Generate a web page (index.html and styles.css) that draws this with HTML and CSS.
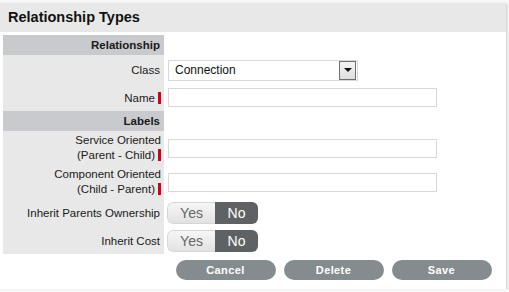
FILE: index.html
```html
<!DOCTYPE html>
<html>
<head>
<meta charset="utf-8">
<link rel="stylesheet" href="styles.css">
</head>
<body>
<div class="panel">
  <div class="title">Relationship Types</div>
  <div class="form">
    <div class="head">Relationship</div><div class="val"></div>

    <div class="lbl r-class">Class</div>
    <div class="val r-class">
      <div class="select"><span class="sel-text">Connection</span><span class="sel-btn"><span class="tri"></span></span></div>
    </div>

    <div class="lbl req r-name">Name<span class="mark"></span></div>
    <div class="val r-name"><div class="input"></div></div>

    <div class="head">Labels</div><div class="val"></div>

    <div class="lbl req r-two"><span class="two">Service Oriented<br>(Parent - Child)<span class="mark"></span></span></div>
    <div class="val r-two"><div class="input"></div></div>

    <div class="lbl req r-two"><span class="two">Component Oriented<br>(Child - Parent)<span class="mark"></span></span></div>
    <div class="val r-two"><div class="input"></div></div>

    <div class="lbl r-tog1">Inherit Parents Ownership</div>
    <div class="val r-tog1"><div class="toggle"><span class="yes">Yes</span><span class="no">No</span></div></div>

    <div class="lbl r-tog2">Inherit Cost</div>
    <div class="val r-tog2"><div class="toggle"><span class="yes">Yes</span><span class="no">No</span></div></div>

    <div class="spacer"></div>
    <div class="buttons">
      <span class="btn">Cancel</span>
      <span class="btn">Delete</span>
      <span class="btn">Save</span>
    </div>
  </div>
</div>
</body>
</html>
```
FILE: styles.css
```css
html, body {
  margin: 0;
  padding: 0;
  background: #f6f6f6;
}
body {
  font-family: "Liberation Sans", Arial, sans-serif;
  font-size: 11px;
  color: #1a1a1a;
  padding-top: 3px;
}
.panel {
  width: 506px;
  height: 286px;
  background: #fff;
  box-shadow: 1px 1px 2px rgba(0,0,0,0.18);
}
.title {
  height: 29px;
  background: #e8e8e8;
  padding-left: 8px;
  font-size: 14.5px;
  font-weight: bold;
  line-height: 29px;
  color: #111;
}
.form {
  display: grid;
  grid-template-columns: 161px 1fr;
  padding: 3px 3px 0 3px;
}
.head {
  height: 20px;
  line-height: 20px;
  background: #c8cacd;
  text-align: right;
  font-weight: bold;
  font-size: 11.5px;
  padding-right: 4px;
  color: #1a1a1a;
}
.lbl {
  background: #e8e8e8;
  display: flex;
  align-items: center;
  justify-content: flex-end;
  padding-right: 4px;
  text-align: right;
  color: #1a1a1a;
  font-size: 11.5px;
}
.lbl.req { padding-right: 3px; }
.two { line-height: 15px; }
.mark {
  display: inline-block;
  width: 3px;
  height: 12px;
  background: #d0021b;
  margin-left: 3px;
  vertical-align: -2px;
}
.val {
  display: flex;
  align-items: center;
  padding-left: 4px;
}
.r-class { height: 29px; }
.r-name { height: 27px; }
.r-two { height: 34px; }
.r-tog1 { height: 28px; }
.r-tog2 { height: 27px; }

.select {
  width: 188px;
  height: 19px;
  border: 1px solid #d8d8d8;
  display: flex;
  align-items: center;
  justify-content: space-between;
  margin-top: 1px;
}
.sel-text {
  font-size: 12px;
  padding-left: 6px;
  color: #111;
}
.sel-btn {
  width: 15px;
  height: 17px;
  border: 1px solid #6f6f6f;
  background: linear-gradient(#f4f4f4, #dedede);
  display: flex;
  align-items: center;
  justify-content: center;
  margin-right: 1px;
}
.tri {
  width: 0;
  height: 0;
  border-left: 4px solid transparent;
  border-right: 4px solid transparent;
  border-top: 4px solid #111;
}
.input {
  width: 267px;
  height: 17px;
  border: 1px solid #d8d8d8;
  background: #fff;
}
.toggle {
  display: flex;
  height: 22px;
  border-radius: 6px;
  overflow: hidden;
  font-size: 14px;
  margin-left: -1px;
}
.yes {
  width: 47px;
  background: linear-gradient(#f6f6f6, #e2e2e2);
  border: 1px solid #d6d6d6;
  border-right: none;
  border-radius: 6px 0 0 6px;
  color: #666;
  display: flex;
  align-items: center;
  justify-content: center;
}
.no {
  width: 43px;
  background: #5f6265;
  color: #fff;
  display: flex;
  align-items: center;
  justify-content: center;
}
.spacer { height: 1px; }
.buttons {
  display: flex;
  justify-content: center;
  gap: 8px;
  padding-top: 6px;
}
.btn {
  width: 100px;
  height: 20px;
  border-radius: 10px;
  background: #858c90;
  color: #fff;
  font-weight: bold;
  font-size: 11px;
  display: flex;
  align-items: center;
  justify-content: center;
  letter-spacing: 0.4px;
}
```
